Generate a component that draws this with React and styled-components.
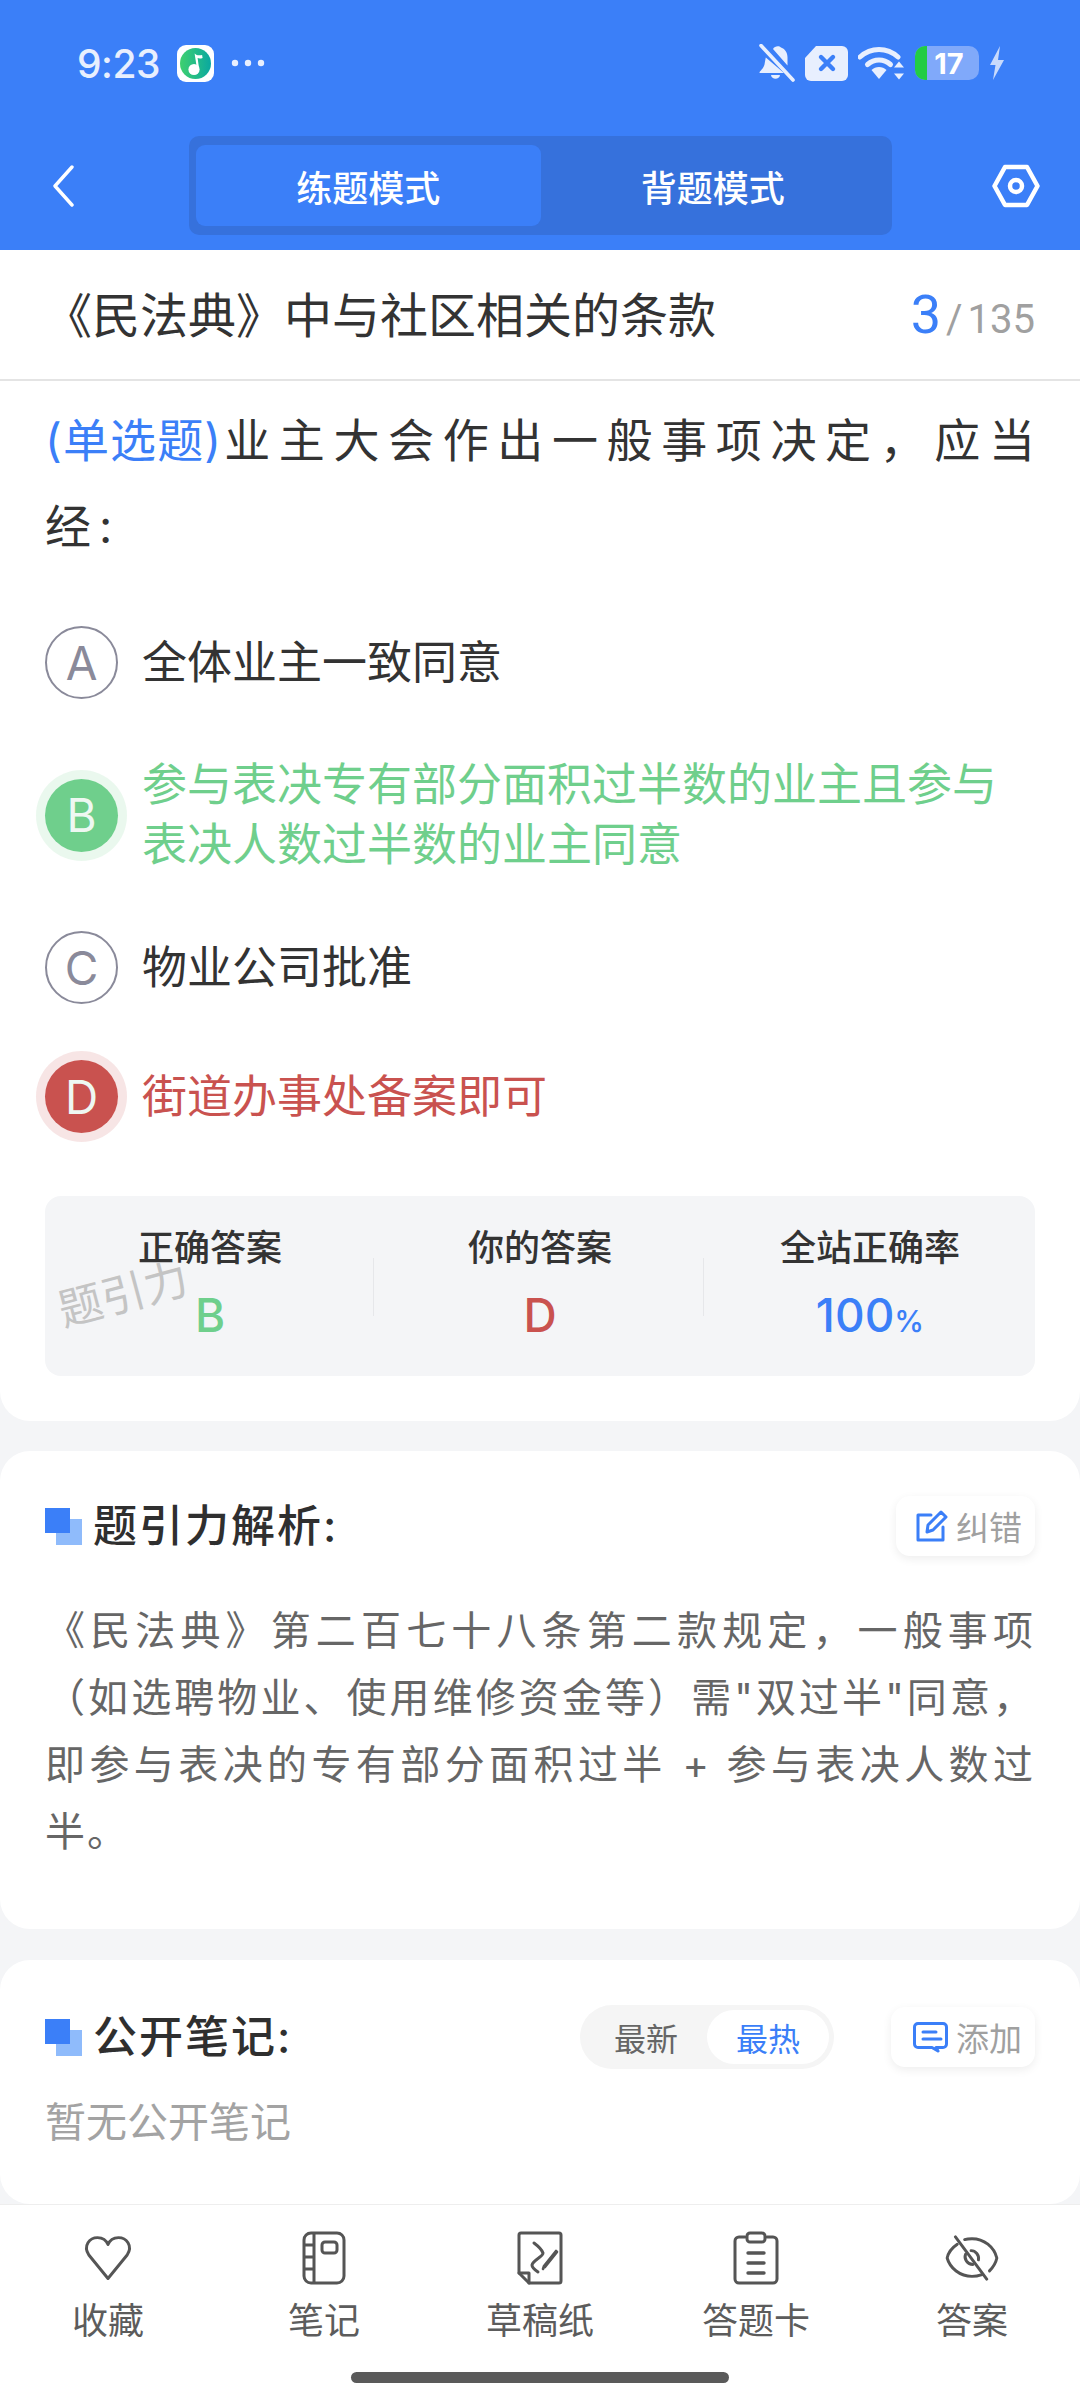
import styled, { createGlobalStyle } from "styled-components";

const GlobalStyle = createGlobalStyle`
  * { box-sizing: border-box; }
  html, body { margin: 0; padding: 0; background: #f4f5f7; }
  body { font-family: Inter, "Noto Sans CJK SC", sans-serif; }
`;

const BLUE = "#3b7ff8";
const GREEN = "#6fcf8c";
const RED = "#c9524f";

const Page = styled.div`
  width: 1080px;
  height: 2400px;
  display: flex;
  flex-direction: column;
  overflow: hidden;
  background: #f4f5f7;
`;
const Main = styled.div`
  flex: 1;
  min-height: 0;
`;
const Header = styled.header`
  background: ${BLUE};
  height: 250px;
`;
const StatusBar = styled.div`
  height: 136px;
  padding: 0 75px 10px 77px;
  display: flex;
  align-items: center;
  justify-content: space-between;
`;
const StatusGroup = styled.div`
  display: flex;
  align-items: center;
  gap: ${(p) => p.$gap || 12}px;
`;
const Clock = styled.span`
  font-size: 39px;
  font-weight: 500;
  color: #e8effe;
  letter-spacing: -0.5px;
`;
const AppBadge = styled.div`
  width: 37px;
  height: 37px;
  border-radius: 9px;
  background: #fff;
  display: flex;
  align-items: center;
  justify-content: center;
`;
const Battery = styled.div`
  position: relative;
  width: 64px;
  height: 34px;
  border-radius: 10px;
  overflow: hidden;
  background: #80a9fa;
  display: flex;
  align-items: center;
  justify-content: center;
  padding-left: 4px;
  color: #fff;
  font-size: 29px;
  font-weight: 700;
  &::before {
    content: "";
    position: absolute;
    left: 0;
    top: 0;
    bottom: 0;
    width: 12px;
    background: #22cc44;
  }
`;
const NavRow = styled.div`
  height: 99px;
  padding: 0 40px 0 52px;
  display: flex;
  align-items: center;
  justify-content: space-between;
`;
const ModeTabs = styled.div`
  width: 703px;
  height: 99px;
  margin-left: 15px;
  padding: 9px 7px;
  border-radius: 10px;
  background: #3671dc;
  display: flex;
`;
const ModeTab = styled.div`
  flex: 1;
  border-radius: 9px;
  background: ${(p) => (p.$active ? BLUE : "transparent")};
  color: #fff;
  font-size: 36px;
  font-weight: 500;
  display: flex;
  align-items: center;
  justify-content: center;
`;
const QuestionCard = styled.section`
  background: #fff;
  border-radius: 0 0 30px 30px;
  padding-bottom: 45px;
`;
const TitleBar = styled.div`
  height: 131px;
  padding: 0 45px;
  border-bottom: 2px solid #e4e4e4;
  display: flex;
  align-items: center;
  justify-content: space-between;
`;
const Title = styled.h1`
  margin: 0 0 0 -1px;
  padding-bottom: 5px;
  font-size: 48px;
  font-weight: 400;
  color: #333;
`;
const Counter = styled.div`
  font-family: Roboto, sans-serif;
  font-size: 40px;
  color: #a0a0a0;
  display: flex;
  align-items: baseline;
  gap: 5px;
`;
const CounterNow = styled.span`
  font-size: 54px;
  color: ${BLUE};
`;
const Question = styled.p`
  margin: 0;
  padding: 16px 37px 0 45px;
  font-size: 46px;
  line-height: 86px;
  letter-spacing: 8px;
  color: #333;
  text-align: justify;
`;
const QuestionTag = styled.span`
  color: ${BLUE};
  letter-spacing: 0.5px;
  margin-right: 2px;
`;
const Options = styled.div`
  margin-top: 57px;
  padding: 0 45px;
  display: flex;
  flex-direction: column;
  gap: 56px;
`;
const OptionRow = styled.div`
  display: flex;
  align-items: center;
  gap: 24px;
  min-height: 72px;
`;
const OptionMark = styled.div`
  flex: none;
  width: 73px;
  height: 73px;
  border-radius: 50%;
  display: flex;
  align-items: center;
  justify-content: center;
  font-size: 46px;
  color: ${(p) => (p.$color ? "#eef8f2" : "#8a8a9a")};
  background: ${(p) => p.$color || "transparent"};
  border: ${(p) => (p.$color ? "none" : "2px solid #8a8a9a")};
  box-shadow: ${(p) => (p.$color ? `0 0 0 9px ${p.$color}26` : "none")};
`;
const OptionText = styled.div`
  font-size: 45px;
  line-height: 60px;
  color: ${(p) => p.$color || "#333"};
`;
const StatsBox = styled.div`
  position: relative;
  margin: 63px 45px 0;
  height: 180px;
  border-radius: 16px;
  background: #f4f5f7;
  display: flex;
`;
const Stat = styled.div`
  flex: 1;
  padding-top: 29px;
  display: flex;
  flex-direction: column;
  align-items: center;
  gap: 16px;
  position: relative;
  & + &::before {
    content: "";
    position: absolute;
    left: -2px;
    top: 62px;
    height: 58px;
    width: 1px;
    background: #e6e7ea;
  }
`;
const StatLabel = styled.div`
  font-size: 36px;
  line-height: 46px;
  font-weight: 500;
  color: #333;
`;
const StatValue = styled.div`
  font-size: 46px;
  line-height: 56px;
  font-weight: 500;
  color: ${(p) => p.$color};
`;
const StatUnit = styled.span`
  font-size: 30px;
`;
const Watermark = styled.div`
  position: absolute;
  left: 12px;
  top: 70px;
  font-size: 44px;
  line-height: 56px;
  color: #c4c4c4;
  transform: rotate(-15deg);
`;
const Card = styled.section`
  margin-top: ${(p) => p.$top}px;
  padding: 45px 45px ${(p) => p.$bottom}px;
  background: #fff;
  border-radius: 30px;
`;
const CardHead = styled.div`
  min-height: ${(p) => p.$height}px;
  display: flex;
  align-items: center;
`;
const HeadMark = styled.div`
  position: relative;
  flex: none;
  width: 37px;
  height: 37px;
  margin-right: 11px;
  &::before,
  &::after {
    content: "";
    position: absolute;
  }
  &::after {
    left: 0;
    top: 0;
    width: 25px;
    height: 25px;
    background: ${BLUE};
  }
  &::before {
    left: 11px;
    top: 11px;
    width: 26px;
    height: 26px;
    background: #8fbbfb;
  }
`;
const CardTitle = styled.h2`
  flex: 1;
  margin: 0;
  font-size: 44px;
  line-height: 44px;
  font-weight: 500;
  letter-spacing: 2px;
  color: #2f2f2f;
`;
const SmallButton = styled.div`
  height: 60px;
  margin-left: ${(p) => p.$left || 0}px;
  padding: 0 13px 0 ${(p) => p.$pad}px;
  border-radius: 14px;
  background: #fff;
  box-shadow: 0 3px 10px rgba(0, 0, 0, 0.07);
  display: flex;
  align-items: center;
  gap: 8px;
  font-size: 33px;
  color: #a0a0a0;
`;
const Analysis = styled.p`
  margin: 41px 0 0;
  font-size: 40px;
  line-height: 67px;
  letter-spacing: 2px;
  color: #666;
  text-align: justify;
`;
const SortToggle = styled.div`
  width: 254px;
  height: 64px;
  padding: 5px;
  border-radius: 32px;
  background: #f5f5f5;
  display: flex;
  justify-content: space-between;
`;
const SortItem = styled.div`
  width: 122px;
  border-radius: 27px;
  background: ${(p) => (p.$active ? "#fff" : "transparent")};
  color: ${(p) => (p.$active ? BLUE : "#666")};
  font-size: 32px;
  display: flex;
  align-items: center;
  justify-content: center;
`;
const Empty = styled.div`
  margin-top: 23px;
  font-size: 41px;
  line-height: 60px;
  color: #a3a3a3;
`;
const TabBar = styled.nav`
  flex: none;
  height: 196px;
  background: #fff;
  border-top: 1px solid #eeeeee;
  display: flex;
  flex-direction: column;
`;
const TabRow = styled.div`
  display: flex;
  padding-top: 26px;
`;
const TabItem = styled.div`
  flex: 1;
  display: flex;
  flex-direction: column;
  align-items: center;
  gap: 12px;
  font-size: 36px;
  line-height: 48px;
  color: #5c5c5c;
`;
const IconSlot = styled.div`
  height: 54px;
  display: flex;
  align-items: center;
`;
const HomeBar = styled.div`
  width: 378px;
  height: 11px;
  margin: 27px auto 0;
  border-radius: 6px;
  background: #5a5a5a;
`;

const BackIcon = () => (
  <svg width="22" height="42" viewBox="0 0 22 42" fill="none">
    <path d="M20 2 3 21l17 19" stroke="#fff" strokeWidth="3.4" strokeLinecap="round" strokeLinejoin="round" />
  </svg>
);
const GearIcon = () => (
  <svg width="48" height="44" viewBox="0 0 48 44" fill="none" stroke="#fff" strokeWidth="4.5" strokeLinejoin="round">
    <path d="M13 3h22l10.5 19L35 41H13L2.5 22z" />
    <circle cx="24" cy="22" r="6" />
  </svg>
);
const MusicIcon = () => (
  <svg width="31" height="31" viewBox="0 0 31 31">
    <defs>
      <linearGradient id="music" x1="0" y1="0" x2="1" y2="0">
        <stop offset="0" stopColor="#3fd06f" />
        <stop offset="1" stopColor="#0aa8a0" />
      </linearGradient>
    </defs>
    <circle cx="15.5" cy="15.5" r="15.5" fill="url(#music)" />
    <circle cx="14" cy="21.5" r="5.6" fill="#fff" />
    <path d="M17 21 14.6 5.5c2 2.2 5 2 7.5 1.4l.5 3c-2 .7-3.6.6-5 .1L19 20z" fill="#fff" />
  </svg>
);
const BellOffIcon = () => (
  <svg width="37" height="38" viewBox="0 0 37 38" fill="#e8effe">
    <path d="M15 5c1.500-3 6-3.500 8-1.500 4.500 1.500 6.500 5.500 6.500 10v8zM7.800 13.500 26 29H1.500c0-2.500 3.500-3.500 5-8.500.5-2.500.8-5 1.300-7z" />
    <path d="M13 31h9c-.5 5-8.500 5-9 0z" />
    <path d="M3 1.500 35 36" stroke="#e8effe" strokeWidth="3.6" strokeLinecap="round" />
  </svg>
);
const CloseTagIcon = () => (
  <svg width="43" height="35" viewBox="0 0 43 35">
    <path d="M11 0h26a6 6 0 0 1 6 6v23a6 6 0 0 1-6 6H6a6 6 0 0 1-6-6V12z" fill="#e8effe" />
    <path d="M16 11 28 23M28 11 16 23" stroke={BLUE} strokeWidth="4.4" strokeLinecap="round" />
  </svg>
);
const WifiIcon = () => (
  <svg width="47" height="34" viewBox="0 0 47 34" fill="none">
    <path d="M2 11C13 1 29 1 40 11" stroke="#e8effe" strokeWidth="5" strokeLinecap="round" />
    <path d="M9.500 18.500c7-6 16-6 23 0" stroke="#e8effe" strokeWidth="5" strokeLinecap="round" />
    <path d="M13.500 24c4-4 11-4 15 0l-7.500 9z" fill="#e8effe" />
    <path d="M41 15.500l5 6h-10zM41 33.500l5-6h-10z" fill="#e8effe" />
  </svg>
);
const BoltIcon = () => (
  <svg width="16" height="34" viewBox="0 0 16 34" fill="#c8dafc">
    <path d="M11 0 1 19h5.500L4 34l11-20H9z" />
  </svg>
);
const EditIcon = () => (
  <svg width="32" height="32" viewBox="0 0 32 32" fill="none" stroke={BLUE} strokeWidth="3" strokeLinejoin="round" strokeLinecap="round">
    <path d="M15 5H2v25h25V17" />
    <path d="M11 22l1-7L25 2l5 5-13 13z" />
  </svg>
);
const CommentIcon = () => (
  <svg width="35" height="31" viewBox="0 0 35 31" fill="none" stroke={BLUE} strokeWidth="3" strokeLinecap="round" strokeLinejoin="round">
    <path d="M5 1.500h25a3.500 3.500 0 0 1 3.500 3.500v17a3.500 3.500 0 0 1-3.500 3.500h-7l2 3.500-6-3.500H5A3.500 3.500 0 0 1 1.500 22V5A3.500 3.500 0 0 1 5 1.500z" />
    <path d="M10 10h13M10 17h18" />
  </svg>
);
const HeartIcon = () => (
  <svg width="52" height="47" viewBox="0 0 56 54" fill="none" stroke="#555" strokeWidth="3.4" strokeLinejoin="round">
    <path d="M28 50 6 23C-1 12 7 3 16 3c6 0 10 3 12 8 2-5 6-8 12-8 9 0 17 9 10 20z" />
  </svg>
);
const NotebookIcon = () => (
  <svg width="44" height="54" viewBox="0 0 44 54" fill="none" stroke="#555" strokeWidth="3" strokeLinejoin="round">
    <rect x="2" y="2" width="40" height="50" rx="7" />
    <path d="M12 2v50M2 14h10M2 26h10M2 38h10" />
    <rect x="20" y="11" width="15" height="11" rx="3" />
  </svg>
);
const SketchIcon = () => (
  <svg width="46" height="54" viewBox="0 0 46 54" fill="none" stroke="#555" strokeWidth="3" strokeLinejoin="round" strokeLinecap="round">
    <path d="M12 52h30a2 2 0 0 0 2-2V4a2 2 0 0 0-2-2H4a2 2 0 0 0-2 2v38z" />
    <path d="M2 42h10v10" />
    <path d="M17 12c4 3 8 7 9 10 0 4-10 7-11 12 0 3 3 5 6 7" />
    <path d="M28 36 40 21l-1-1-12 15zM26 38l1-3" strokeWidth="2.6" />
  </svg>
);
const ClipboardIcon = () => (
  <svg width="46" height="54" viewBox="0 0 46 54" fill="none" stroke="#555" strokeWidth="3" strokeLinejoin="round" strokeLinecap="round">
    <path d="M12 6H6a4 4 0 0 0-4 4v38a4 4 0 0 0 4 4h34a4 4 0 0 0 4-4V10a4 4 0 0 0-4-4h-6" />
    <rect x="14" y="2" width="18" height="9" rx="3" />
    <path d="M15 22h16M15 32h16M15 42h16" strokeWidth="3.4" />
  </svg>
);
const EyeOffIcon = () => (
  <svg width="56" height="46" viewBox="0 0 58 50" fill="none" stroke="#555" strokeWidth="3.2" strokeLinecap="round" strokeLinejoin="round">
    <path d="M13 10C7 14 3 20 2 25c3 11 14 20 27 20 4 0 8-1 11-2" />
    <path d="M21 5c3-1 5-1 8-1 13 0 24 9 27 21-1 5-4 10-8 14" />
    <path d="M22 21c-2 5 2 11 8 11M36 27c1-5-3-10-8-10" />
    <path d="M11 2l34 46" />
  </svg>
);

const options = [
  { key: "A", text: "全体业主一致同意" },
  { key: "B", text: "参与表决专有部分面积过半数的业主且参与表决人数过半数的业主同意", color: GREEN },
  { key: "C", text: "物业公司批准" },
  { key: "D", text: "街道办事处备案即可", color: RED },
];

const tabs = [
  { label: "收藏", Icon: HeartIcon },
  { label: "笔记", Icon: NotebookIcon },
  { label: "草稿纸", Icon: SketchIcon },
  { label: "答题卡", Icon: ClipboardIcon },
  { label: "答案", Icon: EyeOffIcon },
];

export default function App() {
  return (
    <Page>
      <GlobalStyle />
      <Main>
        <Header>
          <StatusBar>
            <StatusGroup $gap={17}>
              <Clock>9:23</Clock>
              <AppBadge><MusicIcon /></AppBadge>
              <svg width="34" height="8" viewBox="0 0 34 8" fill="#e8effe">
                <circle cx="4" cy="4" r="3.200" />
                <circle cx="17" cy="4" r="3.200" />
                <circle cx="30" cy="4" r="3.200" />
              </svg>
            </StatusGroup>
            <StatusGroup $gap={10}>
              <BellOffIcon />
              <CloseTagIcon />
              <WifiIcon />
              <Battery>17</Battery>
              <BoltIcon />
            </StatusGroup>
          </StatusBar>
          <NavRow>
            <BackIcon />
            <ModeTabs>
              <ModeTab $active>练题模式</ModeTab>
              <ModeTab>背题模式</ModeTab>
            </ModeTabs>
            <GearIcon />
          </NavRow>
        </Header>

        <QuestionCard>
          <TitleBar>
            <Title>《民法典》中与社区相关的条款</Title>
            <Counter>
              <CounterNow>3</CounterNow>
              <span>/</span>
              <span>135</span>
            </Counter>
          </TitleBar>
          <Question>
            <QuestionTag>(单选题)</QuestionTag>
            <span>业主大会作出一般事项决定，应当经:</span>
          </Question>
          <Options>
            {options.map((o) => (
              <OptionRow key={o.key}>
                <OptionMark $color={o.color}>{o.key}</OptionMark>
                <OptionText $color={o.color}>{o.text}</OptionText>
              </OptionRow>
            ))}
          </Options>
          <StatsBox>
            <Stat>
              <StatLabel>正确答案</StatLabel>
              <StatValue $color={GREEN}>B</StatValue>
            </Stat>
            <Stat>
              <StatLabel>你的答案</StatLabel>
              <StatValue $color={RED}>D</StatValue>
            </Stat>
            <Stat>
              <StatLabel>全站正确率</StatLabel>
              <StatValue $color={BLUE}>100<StatUnit>%</StatUnit></StatValue>
            </Stat>
            <Watermark>题引力</Watermark>
          </StatsBox>
        </QuestionCard>

        <Card $top={30} $bottom={64}>
          <CardHead $height={60}>
            <HeadMark />
            <CardTitle>题引力解析:</CardTitle>
            <SmallButton $pad={20}><EditIcon />纠错</SmallButton>
          </CardHead>
          <Analysis>
            《民法典》第二百七十八条第二款规定，一般事项（如选聘物业、使用维修资金等）需"双过半"同意，即参与表决的专有部分面积过半 + 参与表决人数过半。
          </Analysis>
        </Card>

        <Card $top={31} $bottom={52}>
          <CardHead $height={64}>
            <HeadMark />
            <CardTitle>公开笔记:</CardTitle>
            <SortToggle>
              <SortItem>最新</SortItem>
              <SortItem $active>最热</SortItem>
            </SortToggle>
            <SmallButton $pad={22} $left={57}><CommentIcon />添加</SmallButton>
          </CardHead>
          <Empty>暂无公开笔记</Empty>
        </Card>
      </Main>
      <TabBar>
        <TabRow>
          {tabs.map(({ label, Icon }) => (
            <TabItem key={label}>
              <IconSlot><Icon /></IconSlot>
              {label}
            </TabItem>
          ))}
        </TabRow>
        <HomeBar />
      </TabBar>
    </Page>
  );
}
